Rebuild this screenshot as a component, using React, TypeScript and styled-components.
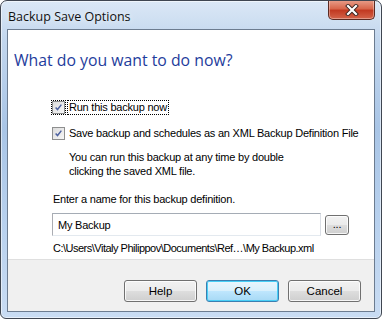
import React from 'react';
import styled, { createGlobalStyle } from 'styled-components';

const GlobalStyle = createGlobalStyle`
  html, body {
    margin: 0;
    padding: 0;
    background: #ffffff;
  }
  body {
    font-family: Tahoma, "Liberation Sans", sans-serif;
  }
`;

const Window = styled.div`
  box-sizing: border-box;
  width: 382px;
  height: 319px;
  display: flex;
  flex-direction: column;
  border: 1px solid #3f4651;
  border-radius: 7px 7px 6px 6px;
  padding: 0 6px 6px 6px;
  background: linear-gradient(180deg, #dbe8f6 0%, #c3d7ee 12%, #a9c5e6 40%, #b8d1ee 70%, #c9dcf3 100%);
  box-shadow: inset 0 0 0 1px rgba(255, 255, 255, 0.55);
  overflow: hidden;
`;

const TitleBar = styled.div`
  height: 28px;
  display: flex;
  align-items: flex-start;
  justify-content: space-between;
`;

const Title = styled.span`
  font-family: "Open Sans", "Noto Sans", sans-serif;
  font-size: 12.5px;
  color: #111;
  padding: 7px 0 0 1px;
  text-shadow: 0 0 6px rgba(255, 255, 255, 0.9);
`;

const CloseButton = styled.div`
  box-sizing: border-box;
  width: 47px;
  height: 20px;
  margin-top: -1px;
  border: 1px solid #5b2a22;
  border-top: none;
  border-radius: 0 0 5px 5px;
  background: linear-gradient(180deg, #e9a08c 0%, #d8674c 45%, #c23a22 55%, #d4644a 100%);
  box-shadow: inset 0 0 0 1px rgba(255, 255, 255, 0.35);
  display: flex;
  align-items: center;
  justify-content: center;
`;

const Client = styled.div`
  flex: 1;
  display: flex;
  flex-direction: column;
  border: 1px solid #6c7c90;
  background: #ffffff;
`;

const Content = styled.div`
  flex: 1;
  padding: 20px 0 0 0;
  font-family: Tahoma, "Liberation Sans", sans-serif;
  font-size: 11px;
  letter-spacing: -0.22px;
  color: #000;
`;

const Heading = styled.div`
  font-family: "Open Sans", "Noto Sans", sans-serif;
  font-size: 15.8px;
  letter-spacing: 0;
  color: #1e3c9c;
  margin-left: 6px;
  line-height: 20px;
`;

const Options = styled.div`
  padding: 30px 0 0 44px;
  display: flex;
  flex-direction: column;
`;

const CheckRow = styled.label<{ $focused?: boolean }>`
  display: flex;
  align-items: center;
  gap: 3px;
  height: 14px;
  margin-bottom: 12px;
  white-space: nowrap;

  & > span {
    padding: 0 1px;
    outline: ${(p) => (p.$focused ? '1px dotted #000' : 'none')};
    line-height: 13px;
  }
`;

const Box = styled.span`
  box-sizing: border-box;
  width: 13px;
  height: 13px;
  border: 1px solid #8e8f8f;
  background: linear-gradient(135deg, #dcdcdc 0%, #f6f6f6 100%);
  display: flex;
  align-items: center;
  justify-content: center;
`;

const Note = styled.div`
  margin: -2px 0 0 17px;
  line-height: 14px;
`;

const NameLabel = styled.div`
  margin: 14px 0 0 1px;
  line-height: 14px;
`;

const NameRow = styled.div`
  display: flex;
  align-items: center;
  gap: 4px;
  margin-top: 7px;
`;

const NameInput = styled.div`
  box-sizing: border-box;
  width: 269px;
  height: 23px;
  border: 1px solid #abadb3;
  border-top-color: #a5acb5;
  border-bottom-color: #e3e9ef;
  border-right-color: #dbdfe6;
  padding: 0 0 0 5px;
  display: flex;
  align-items: center;
`;

const BrowseButton = styled.div`
  box-sizing: border-box;
  width: 24px;
  height: 20px;
  border: 1px solid #707070;
  border-radius: 3px;
  background: linear-gradient(180deg, #f2f2f2 0%, #ebebeb 48%, #dddddd 52%, #cfcfcf 100%);
  box-shadow: inset 0 0 0 1px rgba(255, 255, 255, 0.8);
  display: flex;
  align-items: center;
  justify-content: center;
  line-height: 10px;
  padding-bottom: 2px;
`;

const PathText = styled.div`
  margin: 5px 0 0 1px;
  line-height: 14px;
  letter-spacing: -0.5px;
  white-space: nowrap;
`;

const Footer = styled.div`
  height: 51px;
  border-top: 1px solid #dfdfdf;
  background: #f0f0f0;
  display: flex;
  align-items: center;
  justify-content: flex-end;
  gap: 9px;
  padding: 0 13px 0 0;
`;

const DialogButton = styled.div<{ $default?: boolean }>`
  box-sizing: border-box;
  width: 73px;
  height: 22px;
  border: 1px solid ${(p) => (p.$default ? '#3c7fb1' : '#707070')};
  border-radius: 3px;
  background: ${(p) =>
    p.$default
      ? 'linear-gradient(180deg, #eaf6fd 0%, #d9f0fc 48%, #bee6fd 52%, #a7d9f5 100%)'
      : 'linear-gradient(180deg, #f2f2f2 0%, #ebebeb 48%, #dddddd 52%, #cfcfcf 100%)'};
  box-shadow: inset 0 0 0 1px ${(p) => (p.$default ? '#48cff6' : 'rgba(255, 255, 255, 0.8)')};
  display: flex;
  align-items: center;
  justify-content: center;
  font-family: Tahoma, "Liberation Sans", sans-serif;
  font-size: 11.5px;
  color: #000;
  margin-top: 10px;
`;

const Check = () => (
  <svg width="11" height="11" viewBox="0 0 11 11">
    <path d="M2 5.5 L4.3 8 L9 2" fill="none" stroke="#4d61a0" strokeWidth="1.8" />
  </svg>
);

const CloseGlyph = () => (
  <svg width="14" height="12" viewBox="0 0 14 12">
    <path d="M3 2 L11 10 M11 2 L3 10" stroke="#3b2420" strokeWidth="4" strokeLinecap="square" />
    <path d="M3 2 L11 10 M11 2 L3 10" stroke="#ffffff" strokeWidth="2.2" strokeLinecap="square" />
  </svg>
);

export default function App() {
  return (
    <>
      <GlobalStyle />
      <Window>
        <TitleBar>
          <Title>Backup Save Options</Title>
          <CloseButton>
            <CloseGlyph />
          </CloseButton>
        </TitleBar>
        <Client>
          <Content>
            <Heading>What do you want to do now?</Heading>
            <Options>
              <CheckRow $focused>
                <Box>
                  <Check />
                </Box>
                <span>Run this backup now</span>
              </CheckRow>
              <CheckRow>
                <Box>
                  <Check />
                </Box>
                <span>Save backup and schedules as an XML Backup Definition File</span>
              </CheckRow>
              <Note>
                You can run this backup at any time by double
                <br />
                clicking the saved XML file.
              </Note>
              <NameLabel>Enter a name for this backup definition.</NameLabel>
              <NameRow>
                <NameInput>My Backup</NameInput>
                <BrowseButton>...</BrowseButton>
              </NameRow>
              <PathText>C:\Users\Vitaly Philippov\Documents\Ref…\My Backup.xml</PathText>
            </Options>
          </Content>
          <Footer>
            <DialogButton>Help</DialogButton>
            <DialogButton $default>OK</DialogButton>
            <DialogButton>Cancel</DialogButton>
          </Footer>
        </Client>
      </Window>
    </>
  );
}
